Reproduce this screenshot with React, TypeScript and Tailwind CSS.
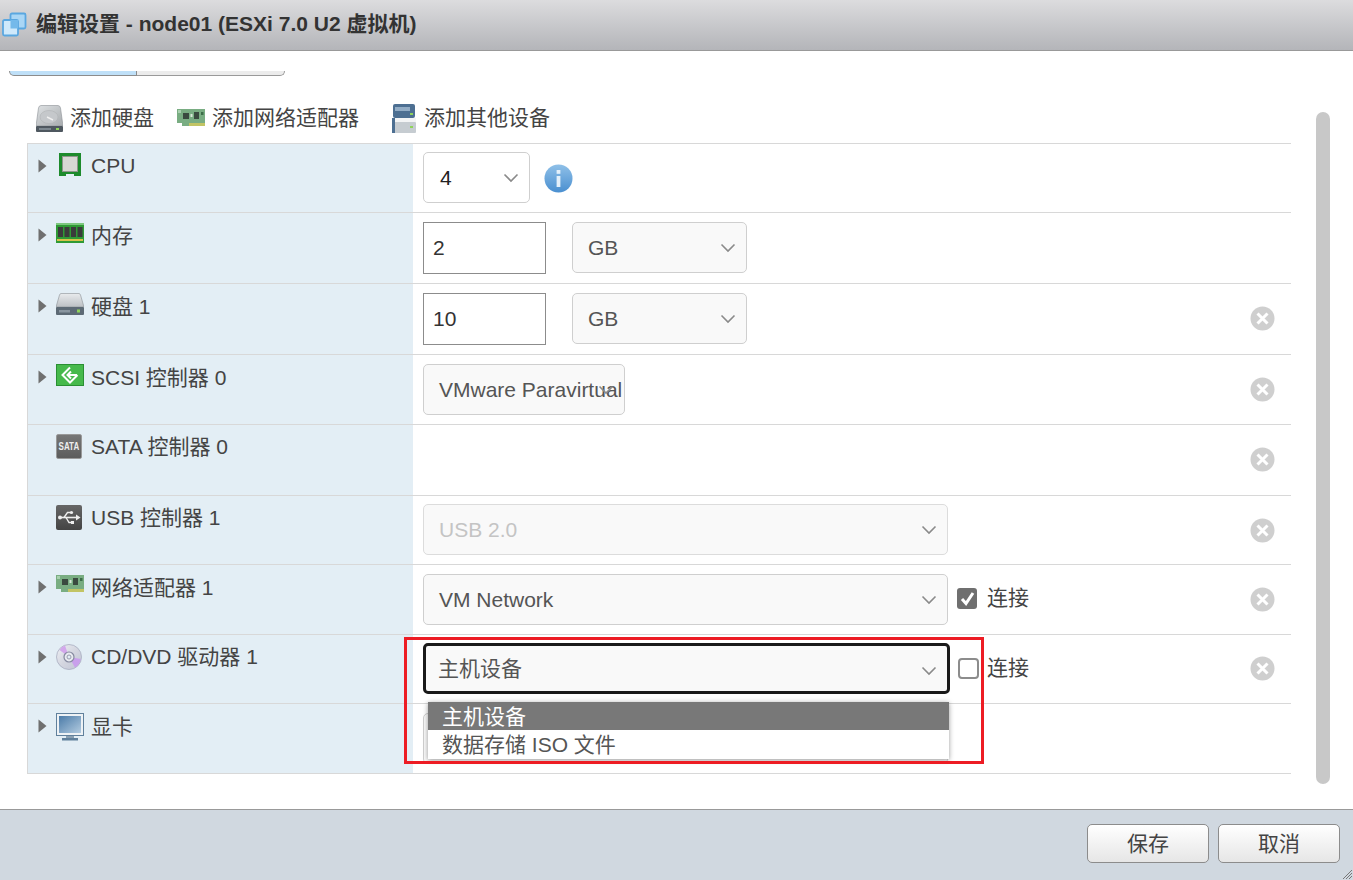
import React from "react";

const Chevron = ({ className = "" }: { className?: string }) => (
  <svg width="16" height="10" viewBox="0 0 16 10" className={className}>
    <path d="M1.5 1.5 L8 8 L14.5 1.5" fill="none" stroke="#8a8a8a" strokeWidth="1.6" />
  </svg>
);

const Caret = () => (
  <svg width="9" height="14" viewBox="0 0 9 14" className="shrink-0">
    <path d="M0.5 0.5 L8.5 7 L0.5 13.5 Z" fill="#6f6f6f" />
  </svg>
);

const CloseIcon = () => (
  <svg width="25" height="25" viewBox="0 0 25 25">
    <circle cx="12.5" cy="12.5" r="12" fill="#cfcfcf" />
    <path d="M7.5 7.5 L17.5 17.5 M17.5 7.5 L7.5 17.5" stroke="#fff" strokeWidth="3" />
  </svg>
);

const InfoIcon = () => (
  <svg width="29" height="29" viewBox="0 0 29 29">
    <defs>
      <linearGradient id="infoG" x1="0" y1="0" x2="0" y2="1">
        <stop offset="0" stopColor="#8fc0e8" />
        <stop offset="1" stopColor="#4a8fd0" />
      </linearGradient>
    </defs>
    <circle cx="14.5" cy="14.5" r="14" fill="url(#infoG)" />
    <rect x="12.6" y="12" width="3.8" height="11" fill="#e4f0fa" />
    <rect x="12.6" y="6" width="3.8" height="3.8" fill="#e4f0fa" />
  </svg>
);

const TitleIcon = () => (
  <svg width="26" height="26" viewBox="0 0 26 26">
    <rect x="9.5" y="1.5" width="15" height="15" rx="1.5" fill="#a9d6f5" stroke="#5aa7e0" strokeWidth="1.8" />
    <rect x="2" y="8" width="15" height="15.5" rx="1.5" fill="#cfe9fb" stroke="#5aa7e0" strokeWidth="1.8" />
    <rect x="9.5" y="8" width="7.5" height="8.5" fill="#74b9ea" />
  </svg>
);

const CpuIcon = () => (
  <svg width="22" height="24" viewBox="0 0 22 24">
    <path d="M0 0 H22 V23 H15 V21 H7 V23 H0 Z" fill="#1d8a2c" />
    <rect x="3.5" y="3.5" width="15" height="15" fill="#d8d8d4" stroke="#8f958c" />
  </svg>
);

const RamIcon = () => (
  <svg width="28" height="22" viewBox="0 0 28 22">
    <rect x="0" y="1" width="28" height="20" fill="#2f9a35" />
    <rect x="0" y="1" width="28" height="2" fill="#7cc67e" />
    <rect x="2" y="5" width="5" height="10" fill="#3b3b3b" />
    <rect x="8.5" y="5" width="5" height="10" fill="#3b3b3b" />
    <rect x="15" y="5" width="5" height="10" fill="#3b3b3b" />
    <rect x="21.5" y="5" width="5" height="10" fill="#3b3b3b" />
    <rect x="1" y="17" width="26" height="2" fill="#d8c04a" />
  </svg>
);

const DiskIcon = () => (
  <svg width="28" height="22" viewBox="0 0 28 22">
    <defs>
      <linearGradient id="diskRow" x1="0" y1="0" x2="0" y2="1">
        <stop offset="0" stopColor="#e9ebed" />
        <stop offset="1" stopColor="#bcc0c4" />
      </linearGradient>
    </defs>
    <path d="M5 0.5 H23 Q24 0.5 24.5 2 L28 14 H0 L3.5 2 Q4 0.5 5 0.5 Z" fill="url(#diskRow)" stroke="#8c9196" strokeWidth="0.6" />
    <rect x="0" y="14" width="28" height="8" rx="1" fill="#5d6a75" />
    <rect x="3" y="17" width="11" height="2.5" fill="#8a96a0" />
    <rect x="21" y="16.5" width="3" height="3" fill="#8fd35a" />
  </svg>
);

const BarDiskIcon = () => (
  <svg width="27" height="27" viewBox="0 0 27 27">
    <defs>
      <linearGradient id="diskBar" x1="0" y1="0" x2="1" y2="1">
        <stop offset="0" stopColor="#dfe2e4" />
        <stop offset="1" stopColor="#a7abae" />
      </linearGradient>
    </defs>
    <path d="M5 0.5 H22 Q24 0.5 24.5 3 L27 21 H0 L2.5 3 Q3 0.5 5 0.5 Z" fill="url(#diskBar)" stroke="#8c9196" strokeWidth="0.6" />
    <ellipse cx="13" cy="12" rx="9" ry="6.5" fill="#c5c8cb" stroke="#b0b3b6" strokeWidth="0.6" />
    <path d="M11 12 L17 15" stroke="#f0f0f0" strokeWidth="1.4" />
    <rect x="0" y="21" width="27" height="6" rx="1" fill="#4f5860" />
    <rect x="3" y="23" width="12" height="2" fill="#7d8890" />
    <rect x="20" y="23" width="3" height="2" fill="#8fd35a" />
  </svg>
);

const NicIcon = ({ w = 28, h = 20 }: { w?: number; h?: number }) => (
  <svg width={w} height={h} viewBox="0 0 28 18">
    <path d="M0 0 H28 V14 H12 V17 H5 V14 H0 Z" fill="#79ad82" />
    <rect x="6" y="4" width="6" height="6" fill="#3a4a3f" />
    <rect x="17" y="3" width="5" height="7" fill="#3a4a3f" />
    <rect x="13.5" y="5" width="2" height="3" fill="#d8e8d8" />
    <rect x="24" y="3" width="2.5" height="3" fill="#3d6e49" />
    <rect x="12" y="14" width="16" height="3" fill="#c2c464" />
    <rect x="1" y="1" width="3" height="3" fill="#a8d0ae" />
  </svg>
);

const DeviceIcon = () => (
  <svg width="24" height="29" viewBox="0 0 24 29">
    <rect x="1" y="0" width="22" height="14" rx="2" fill="#4d6f92" />
    <rect x="3" y="3" width="15" height="4" fill="#93adc6" />
    <rect x="18" y="9" width="3" height="2" fill="#8fd35a" />
    <rect x="0" y="14" width="24" height="4" fill="#f3f4f5" />
    <rect x="0" y="18" width="24" height="11" rx="1" fill="#c6ccd1" />
    <rect x="0" y="14" width="3" height="15" fill="#4d6f92" />
    <rect x="18" y="22" width="3" height="2" fill="#8fd35a" />
  </svg>
);

const ScsiIcon = () => (
  <svg width="28" height="22" viewBox="0 0 28 22">
    <rect x="0.5" y="0.5" width="27" height="21" fill="#46b94b" stroke="#2a8f33" />
    <path d="M14 3.5 L6.5 11 L14 18.5 L21.5 11" fill="none" stroke="#fff" strokeWidth="2" />
    <path d="M15 7.5 L11.5 11 L15 14.5" fill="none" stroke="#fff" strokeWidth="2" />
    <rect x="12" y="10" width="9" height="2" fill="#fff" />
  </svg>
);

const SataIcon = () => (
  <div className="w-[26px] h-[25px] bg-gradient-to-b from-[#777] to-[#5c5c5c] border border-[#999] rounded-[2px] flex items-center justify-center shrink-0 overflow-hidden">
    <span className="text-[#eee] text-[10px] font-bold leading-none scale-x-[0.8]">SATA</span>
  </div>
);

const UsbIcon = () => (
  <svg width="26" height="25" viewBox="0 0 26 25">
    <defs>
      <linearGradient id="usbG" x1="0" y1="0" x2="0" y2="1">
        <stop offset="0" stopColor="#666" />
        <stop offset="1" stopColor="#444" />
      </linearGradient>
    </defs>
    <rect x="0" y="0" width="26" height="25" rx="2" fill="url(#usbG)" />
    <path d="M3 12.5 H22" stroke="#eee" strokeWidth="1.6" />
    <path d="M20 9.5 L24.5 12.5 L20 15.5 Z" fill="#eee" />
    <circle cx="4" cy="12.5" r="2" fill="#eee" />
    <path d="M8 12.5 L11.5 7.5 H15" fill="none" stroke="#eee" strokeWidth="1.4" />
    <path d="M10 12.5 L13 17.5 H16" fill="none" stroke="#eee" strokeWidth="1.4" />
    <circle cx="15.5" cy="7.5" r="1.6" fill="#eee" />
    <rect x="15" y="16" width="3" height="3" fill="#eee" />
  </svg>
);

const CdIcon = () => (
  <svg width="26" height="26" viewBox="0 0 26 26">
    <defs>
      <linearGradient id="cdG" x1="0" y1="0" x2="1" y2="1">
        <stop offset="0" stopColor="#eef0f4" />
        <stop offset="0.5" stopColor="#d4d6e0" />
        <stop offset="1" stopColor="#c0c4d4" />
      </linearGradient>
    </defs>
    <circle cx="13" cy="13" r="12.5" fill="url(#cdG)" stroke="#a8adc0" strokeWidth="0.8" />
    <path d="M13 13 L3.5 6 A12 12 0 0 1 9 1.5 Z" fill="#d3a8ec" />
    <path d="M13 13 L24.8 15 A12 12 0 0 1 19 23.5 Z" fill="#c9a0ec" />
    <circle cx="13" cy="13" r="5" fill="#e8eaf0" stroke="#868aa0" strokeWidth="1.2" />
    <circle cx="13" cy="13" r="2" fill="#e3eef5" stroke="#868aa0" strokeWidth="0.8" />
  </svg>
);

const MonitorIcon = () => (
  <svg width="28" height="28" viewBox="0 0 28 28">
    <defs>
      <linearGradient id="monG" x1="0" y1="0" x2="1" y2="1">
        <stop offset="0" stopColor="#4b7ba8" />
        <stop offset="1" stopColor="#b2cbe0" />
      </linearGradient>
    </defs>
    <rect x="0.5" y="0.5" width="27" height="22" fill="#eef2f5" stroke="#60809c" />
    <rect x="3" y="3" width="22" height="17" fill="url(#monG)" />
    <rect x="10" y="23" width="8" height="2" fill="#8aa0b2" />
    <rect x="6" y="25" width="16" height="2.5" fill="#60809c" />
  </svg>
);

const Select = ({
  text,
  className,
  textClass = "text-[#555]",
  bg = "bg-[#f9f9f9]",
  border = "border border-[#cfcfcf]",
  chevron = true,
}: {
  text: string;
  className: string;
  textClass?: string;
  bg?: string;
  border?: string;
  chevron?: boolean;
}) => (
  <div className={`relative h-[51px] rounded-[5px] flex items-center overflow-hidden whitespace-nowrap shrink-0 ${bg} ${border} ${textClass} ${className}`}>
    {text}
    {chevron && <Chevron className="absolute right-[10px] top-[20px]" />}
  </div>
);

const NumInput = ({ value }: { value: string }) => (
  <div className="w-[123px] h-[52px] border border-[#8c8c8c] bg-white flex items-center pl-[9px] text-[#333] shrink-0">
    {value}
  </div>
);

const Connect = ({ checked, className = "" }: { checked: boolean; className?: string }) => (
  <div className={`flex items-center shrink-0 self-start ${className}`}>
    {checked ? (
      <div className="w-[20px] h-[21px] rounded-[3px] bg-[#6f6f6f] flex items-center justify-center">
        <svg width="15" height="15" viewBox="0 0 15 15">
          <path d="M2 8 L6 12.5 L13 2" fill="none" stroke="#fff" strokeWidth="3" />
        </svg>
      </div>
    ) : (
      <div className="w-[21px] h-[21px] rounded-[4px] border-2 border-[#8c8c8c] bg-white" />
    )}
    <span className={`text-[#444] ${checked ? "ml-[10px]" : "ml-[8px]"}`}>连接</span>
  </div>
);

type Row = {
  h: string;
  caret: boolean;
  icon: React.ReactNode;
  iconClass?: string;
  label: string;
  labelClass: string;
  remove: boolean;
  closeUp?: boolean;
  content?: React.ReactNode;
};

const rows: Row[] = [
  {
    h: "h-[69px]",
    caret: true,
    icon: <CpuIcon />,
    iconClass: "pl-[3px]",
    label: "CPU",
    labelClass: "mt-0",
    remove: false,
    content: (
      <>
        <Select text="4" className="w-[107px] pl-[16px] pt-[2px] mb-[2px]" bg="bg-white" textClass="text-[#222]" />
        <div className="ml-[14px]">
          <InfoIcon />
        </div>
      </>
    ),
  },
  {
    h: "h-[71px]",
    caret: true,
    icon: <RamIcon />,
    label: "内存",
    labelClass: "mt-[1px]",
    remove: false,
    content: (
      <>
        <NumInput value="2" />
        <Select text="GB" className="w-[175px] ml-[26px] pl-[15px] pt-[2px] mb-[2px]" />
      </>
    ),
  },
  {
    h: "h-[71px]",
    caret: true,
    icon: <DiskIcon />,
    label: "硬盘 1",
    labelClass: "mt-[1px]",
    remove: true,
    closeUp: true,
    content: (
      <>
        <NumInput value="10" />
        <Select text="GB" className="w-[175px] ml-[26px] pl-[15px] pt-[2px] mb-[2px]" />
      </>
    ),
  },
  {
    h: "h-[70px]",
    caret: true,
    icon: <ScsiIcon />,
    label: "SCSI 控制器 0",
    labelClass: "mt-[1px]",
    remove: true,
    content: <Select text="VMware Paravirtual" className="w-[202px] pl-[15px]" />,
  },
  {
    h: "h-[71px]",
    caret: false,
    icon: <SataIcon />,
    label: "SATA 控制器 0",
    labelClass: "mt-0",
    remove: true,
    closeUp: true,
  },
  {
    h: "h-[69px]",
    caret: false,
    icon: <UsbIcon />,
    label: "USB 控制器 1",
    labelClass: "mt-0",
    remove: true,
    content: <Select text="USB 2.0" className="w-[525px] pl-[15px] pt-[2px] mb-[2px]" textClass="text-[#c4c4c4]" border="border border-[#dcdcdc]" />,
  },
  {
    h: "h-[70px]",
    caret: true,
    icon: <NicIcon />,
    label: "网络适配器 1",
    labelClass: "mt-[1px]",
    remove: true,
    content: (
      <>
        <Select text="VM Network" className="w-[525px] pl-[15px]" />
        <Connect checked className="ml-[9px] mt-[20px]" />
      </>
    ),
  },
  {
    h: "h-[69px]",
    caret: true,
    icon: <CdIcon />,
    label: "CD/DVD 驱动器 1",
    labelClass: "mt-0",
    remove: true,
    closeUp: true,
    content: (
      <>
        <Select text="主机设备" className="w-[527px] pl-[12px] pt-[2px] mb-[2px]" border="border-[3px] border-[#1a1a1a]" />
        <Connect checked={false} className="ml-[8px] mt-[20px]" />
      </>
    ),
  },
  {
    h: "h-[70px]",
    caret: true,
    icon: <MonitorIcon />,
    label: "显卡",
    labelClass: "mt-[1px]",
    remove: false,
    content: <Select text="" className="w-[525px]" chevron={false} />,
  },
];

export default function App() {
  return (
    <div className="relative w-[1353px] h-[880px] overflow-hidden bg-white flex flex-col font-['Liberation_Sans','Noto_Sans_CJK_SC',sans-serif] text-[21px] leading-[26px] text-[#444]">
      <div className="h-[51px] shrink-0 flex items-center bg-gradient-to-b from-[#dcdcde] to-[#b4b5b9] border-b border-[#999] pl-[1px]">
        <TitleIcon />
        <h1 className="ml-[9px] font-bold text-[#333] text-[21px] mt-[-3px]">编辑设置 - node01 (ESXi 7.0 U2 虚拟机)</h1>
      </div>

      <div className="flex flex-1 min-h-0">
        <div className="w-[1291px] shrink-0">
          <div className="ml-[9px] w-[276px] h-[25px] flex items-end">
            <div className="w-[128px] h-[5px] bg-[#bfe0f8] border-b border-l border-r border-[#8c8c8c] rounded-bl-[5px]" />
            <div className="flex-1 h-[5px] bg-[#ececec] border-b border-r border-[#9a9a9a] rounded-br-[5px]" />
          </div>

          <div className="h-[67px] flex items-center pl-[36px] pt-[17px] text-[#444]">
            <BarDiskIcon />
            <span className="ml-[7px]">添加硬盘</span>
            <div className="ml-[23px]">
              <NicIcon h={18} />
            </div>
            <span className="ml-[7px]">添加网络适配器</span>
            <div className="ml-[33px]">
              <DeviceIcon />
            </div>
            <span className="ml-[8px]">添加其他设备</span>
          </div>

          <div className="ml-[27px] w-[1264px] border-t border-l border-[#d8d8d8]">
            {rows.map((row) => (
              <div key={row.label} className={`flex border-b border-[#d8d8d8] box-border ${row.h}`}>
                <div className="w-[385px] shrink-0 bg-[#e3eef5] flex items-start pl-[10px] pt-[9px]">
                  <div className="w-[9px] mr-[9px] mt-[6px] shrink-0">{row.caret && <Caret />}</div>
                  <div className={`w-[28px] shrink-0 ${row.iconClass ?? ""}`}>{row.icon}</div>
                  <span className={`ml-[7px] whitespace-nowrap text-[#444] ${row.labelClass}`}>{row.label}</span>
                </div>
                <div className="flex-1 flex items-center pl-[10px] pr-[16px]">
                  {row.content}
                  {row.remove && (
                    <div className={`ml-auto ${row.closeUp ? "mb-[2px]" : ""}`}>
                      <CloseIcon />
                    </div>
                  )}
                </div>
              </div>
            ))}
          </div>
        </div>
        <div className="ml-[25px] mt-[61px] w-[14px] h-[672px] rounded-[7px] bg-[#c8c8c8]" />
      </div>

      <div className="h-[71px] shrink-0 bg-[#d0d8e0] border-t border-[#999] flex items-start justify-end gap-[9px] pt-[14px] pr-[13px] text-[#444]">
        <button className="w-[122px] h-[39px] rounded-[5px] border border-[#8c8c8c] bg-gradient-to-b from-white to-[#e6e6e6]">保存</button>
        <button className="w-[122px] h-[39px] rounded-[5px] border border-[#8c8c8c] bg-gradient-to-b from-white to-[#e6e6e6]">取消</button>
      </div>

      <svg width="11" height="11" viewBox="0 0 11 11" className="absolute right-0 bottom-0">
        <path d="M1 10 L10 1 M4 10 L10 4 M7 10 L10 7" stroke="#777" strokeWidth="1" />
      </svg>

      <div className="absolute left-[428px] top-[702px] w-[521px] h-[57px] bg-white shadow-[0_1px_5px_rgba(0,0,0,0.4)] text-[#555]">
        <div className="h-[28px] bg-[#787878] text-white pl-[14px] pt-[2px] flex items-center">主机设备</div>
        <div className="h-[29px] pl-[14px] flex items-center">数据存储 ISO 文件</div>
      </div>

      <div className="absolute left-[404px] top-[637px] w-[580px] h-[127px] border-[3px] border-[#ed1c24] pointer-events-none" />
    </div>
  );
}
